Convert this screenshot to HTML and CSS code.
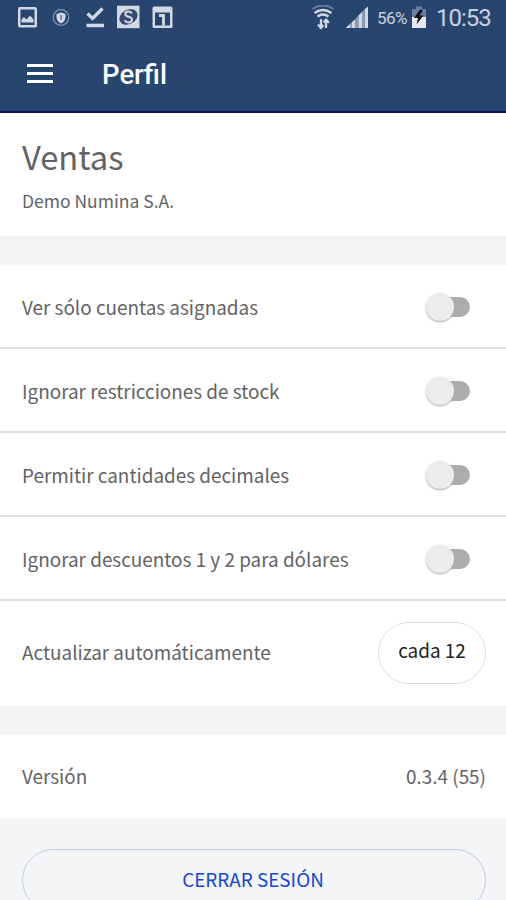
FILE: index.html
```html
<!DOCTYPE html>
<html lang="es">
<head>
<meta charset="utf-8">
<title>Perfil</title>
<link rel="stylesheet" href="styles.css">
</head>
<body>
<header class="top">
  <div class="status">
    <svg class="status-icons" width="160" height="26" viewBox="16 5 160 26">
      <g fill="#d3d9e3">
        <path fill-rule="evenodd" d="M20 7h15q2 0 2 2v16.500q0 2-2 2H20q-2 0-2-2V9q0-2 2-2zm.5 2.500v15.500h14V9.500z"/>
        <path d="M21.500 22.500v-3l2.500-2.500 2.500 2.500 3.500-4 3.500 4v3z"/>
        <path d="M56.500 14l4.500-1.500 4.500 1.500v3q0 4-4.500 6.500-4.500-2.500-4.500-6.500z"/>
        <path d="M86.500 23.700h17.500v3.500H86.500z"/>
        <path d="M117 5.700h22.500v22.500H117z"/>
        <path fill-rule="evenodd" d="M154 6.500h17q1.500 0 1.500 1.500v18.500q0 1.500-1.500 1.500h-17q-1.500 0-1.500-1.500V8q0-1.500 1.500-1.500zm1 6v13h15v-13z"/>
      </g>
      <circle cx="61" cy="17.500" r="7.800" fill="none" stroke="#8295b3" stroke-width="1.200"/>
      <path d="M61 15v5" stroke="#5f7599" stroke-width="1.500"/>
      <path d="M87.500 13.500l5 5 10-10" fill="none" stroke="#d3d9e3" stroke-width="3.200"/>
      <ellipse cx="128.500" cy="17" rx="9.600" ry="7.200" fill="#344c74" transform="rotate(-28 128.500 17)"/>
      <path d="M131.800 13.500q-.8-2-3.500-2-3 0-3 2.500 0 2 3.200 2.800 3.500.8 3.500 3 0 2.600-3.500 2.600-2.800 0-3.800-2.200" fill="none" stroke="#d3d9e3" stroke-width="2"/>
      <path d="M159 15.500h4.500v10" fill="none" stroke="#d3d9e3" stroke-width="2.800"/>
    </svg>
    <div class="status-right">
      <svg width="58" height="26" viewBox="311 5 58 26">
        <path d="M312.500 9q10.500-7 21 0" fill="none" stroke="#667e9f" stroke-width="2"/>
        <path d="M314.500 13q8.500-6 17 0M317.500 16.500q5.500-4 11 0" fill="none" stroke="#d3d9e3" stroke-width="2.300"/>
        <path d="M321 19v9M326 28v-8M318 24.500l3 3.500 2.300-3M323.700 22.500l2.300-2.700 3 3" fill="none" stroke="#d3d9e3" stroke-width="2.300"/>
        <path d="M345.500 28l4.500-4v4zM352 22l3.500-3v9h-3.500zM364.500 9.500l3.500-3V28h-3.500z" fill="#d3d9e3"/>
        <path d="M350 24l2-2v6h-2zM355.500 18.500l3-3V28h-3z" fill="#8c9bb3"/>
        <path d="M358.500 15.500l3.500-3.500V28h-3.500z" fill="#d3d9e3"/>
        <path d="M362 12l2.500-2.500V28H362z" fill="#8c9bb3"/>
      </svg>
      <span class="percent">56%</span>
      <svg class="battery" width="16" height="24" viewBox="411 5 16 24">
        <path d="M416 6.500h6v2.500h4V17h-14V9h4z" fill="#667e9f"/>
        <path d="M412 17h14v11h-14z" fill="#e5e8ed"/>
        <path d="M420 9.500l-6 8.500h4l-1.500 6.500 7-9h-4l3.500-5z" fill="#111"/>
      </svg>
      <span class="clock">10:53</span>
    </div>
  </div>
  <div class="bar">
    <div class="menu"><i></i><i></i><i></i></div>
    <h1>Perfil</h1>
  </div>
</header>
<main>
  <section class="account">
    <h2>Ventas</h2>
    <p>Demo Numina S.A.</p>
  </section>
  <section class="card">
    <div class="row"><span>Ver sólo cuentas asignadas</span><div class="toggle"><b></b></div></div>
    <div class="row"><span>Ignorar restricciones de stock</span><div class="toggle"><b></b></div></div>
    <div class="row"><span>Permitir cantidades decimales</span><div class="toggle"><b></b></div></div>
    <div class="row"><span>Ignorar descuentos 1 y 2 para dólares</span><div class="toggle"><b></b></div></div>
    <div class="row update"><span>Actualizar automáticamente</span><div class="pill">cada 12</div></div>
  </section>
  <section class="card">
    <div class="row version"><span>Versión</span><span>0.3.4 (55)</span></div>
  </section>
  <button class="logout">CERRAR SESIÓN</button>
</main>
</body>
</html>
```
FILE: styles.css
```css
* { box-sizing: border-box; }
body {
  margin: 0;
  height: 900px;
  overflow: hidden;
  background: #f3f5f7;
  color: #636363;
  font: 18.9px/30px "Noto Sans CJK SC", "Noto Sans", sans-serif;
}
h1, h2, p { margin: 0; }
svg { display: block; flex: none; }
.top {
  height: 113px;
  background: #284570;
  border-bottom: 2px solid #101058;
  font-family: Roboto, sans-serif;
}
.status {
  height: 36px;
  padding: 5px 15px 0 16px;
  display: flex;
  justify-content: space-between;
  align-items: flex-start;
  color: #c9d1de;
}
.status-right { display: flex; align-items: flex-start; }
.percent { width: 34px; margin-left: 8px; font-size: 17px; line-height: 27px; letter-spacing: -0.5px; }
.clock { width: 55px; margin-left: 9px; font-size: 24px; line-height: 27px; letter-spacing: -1px; white-space: nowrap; }
.bar { display: flex; align-items: center; height: 76px; padding-left: 27px; }
.menu { width: 26px; display: grid; gap: 5px; margin-top: -2px; }
.menu i { height: 3px; background: #fff; }
.bar h1 { margin: 2px 0 0 49px; color: #fff; font-size: 27.5px; font-weight: 500; }
main { display: flex; flex-direction: column; }
.account { height: 123px; padding: 21px 22px 0; background: #fff; }
.account h2 { font-size: 32.7px; font-weight: 400; line-height: 44px; }
.account p { font-size: 17.5px; line-height: 46px; }
.card { margin-top: 29px; background: #fff; }
.row {
  height: 84px;
  padding: 2px 21px 0 22px;
  display: flex;
  align-items: center;
  justify-content: space-between;
  border-bottom: 2px solid #e0e0e0;
}
.row > span { margin-bottom: 1px; }
.update { height: 105px; padding: 0 20px 2px 22px; border: 0; }
.version { padding: 0 20px 1px 22px; border: 0; }
.toggle { display: flex; align-items: center; width: 40px; height: 20px; margin-right: 15px; border-radius: 10px; background: #adadad; }
.toggle b { width: 28px; height: 28px; flex: none; margin-left: -4px; border-radius: 50%; background: #ececec; box-shadow: 0 1px 2px #aaa; }
.pill { width: 108px; height: 62px; border: 1px solid #ddd; border-radius: 31px; color: #222; line-height: 54px; text-align: center; }
.logout { height: 62px; margin: 30px 20px 0 22px; padding: 0 2px 3px 0; border: 1px solid #c3c7ea; border-radius: 31px; background: transparent; color: #1646d2; font: inherit; }
```
